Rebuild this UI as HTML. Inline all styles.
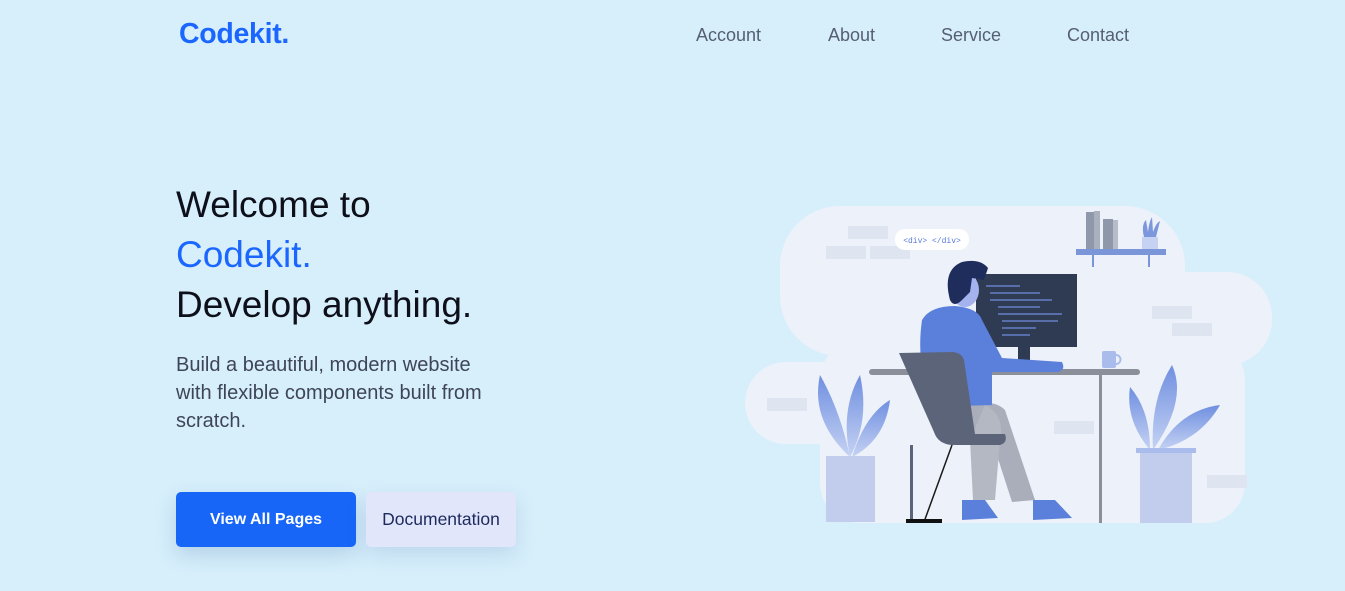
<!DOCTYPE html>
<html><head><meta charset="utf-8"><style>
*{margin:0;padding:0;box-sizing:border-box}
body{width:1345px;height:591px;background:#d7effb;font-family:"Liberation Sans",sans-serif;position:relative;overflow:hidden}
.logo{position:absolute;left:179px;top:18px;font-size:28.5px;font-weight:bold;color:#1a66ff;letter-spacing:-0.3px}
.nav a{position:absolute;top:25px;font-size:18px;color:#555e75;text-decoration:none}
h1{position:absolute;left:176px;top:180px;font-size:37px;font-weight:normal;line-height:50px;color:#0d0f1a}
h1 span{color:#1a66ff}
p{position:absolute;left:176px;top:351px;font-size:20px;line-height:28px;color:#3e4558;width:315px}
.b1{position:absolute;left:176px;top:492px;width:180px;height:55px;background:#1766f8;color:#fff;border-radius:5px;font-size:16px;font-weight:bold;text-align:center;line-height:55px;box-shadow:0 8px 20px rgba(40,90,160,.2)}
.b2{position:absolute;left:366px;top:492px;width:150px;height:55px;background:#e1e6fa;color:#1d2a5e;border-radius:5px;font-size:17.5px;text-align:center;line-height:55px;box-shadow:0 8px 20px rgba(40,90,160,.15)}
svg{position:absolute;left:740px;top:200px}
</style></head><body>
<div class="logo">Codekit.</div>
<div class="nav"><a style="left:696px">Account</a><a style="left:828px">About</a><a style="left:941px">Service</a><a style="left:1067px">Contact</a></div>
<h1>Welcome to<br><span>Codekit.</span><br>Develop anything.</h1>
<p>Build a beautiful, modern website with flexible components built from scratch.</p>
<div class="b1">View All Pages</div>
<div class="b2">Documentation</div>
<svg width="540" height="330" viewBox="0 0 540 330">
<defs><linearGradient id="lf" x1="0" y1="0" x2="0" y2="1"><stop offset="0" stop-color="#6f8fe0"/><stop offset="1" stop-color="#c5d2f3"/></linearGradient></defs>
<g fill="#edf1f9">
<rect x="40" y="6" width="405" height="150" rx="60"/>
<rect x="110" y="72" width="422" height="93" rx="45"/>
<rect x="5" y="162" width="200" height="82" rx="41"/>
<rect x="80" y="140" width="425" height="183" rx="40"/>
</g>
<g fill="#dfe5f0">
<rect x="108" y="26" width="40" height="13"/><rect x="86" y="46" width="40" height="13"/><rect x="130" y="46" width="40" height="13"/>
<rect x="412" y="106" width="40" height="13"/><rect x="432" y="123" width="40" height="13"/>
<rect x="27" y="198" width="40" height="13"/><rect x="314" y="221" width="40" height="13"/><rect x="467" y="275" width="40" height="13"/>
</g>
<rect x="155" y="29" width="74" height="21" rx="10" fill="#fff"/>
<text x="192" y="43" font-size="8" fill="#5b7bd8" text-anchor="middle" font-family="Liberation Mono,monospace">&lt;div&gt; &lt;/div&gt;</text>
<rect x="346" y="12" width="8" height="37" fill="#8f98aa"/><rect x="354" y="11" width="6" height="38" fill="#a9b0be"/><rect x="363" y="19" width="10" height="30" fill="#8f98aa"/><rect x="373" y="20" width="5" height="29" fill="#b6bcc8"/>
<path d="M402 49 L402 37 L418 37 L418 49Z" fill="#c5d2f3"/><path d="M404 37 Q401 25 406 20 L408 32 Q409 22 412 17 L413 32 Q416 23 420 21 L416 37Z" fill="#7d97dc"/>
<rect x="336" y="49" width="90" height="6" fill="#7b95d9"/><rect x="352" y="55" width="2" height="12" fill="#7b95d9"/><rect x="408" y="55" width="2" height="12" fill="#7b95d9"/>
<rect x="236" y="74" width="101" height="73" fill="#2f3a53"/>
<g stroke="#6f8ddd" stroke-width="1.2"><line x1="246" y1="86" x2="280" y2="86"/><line x1="250" y1="93" x2="300" y2="93"/><line x1="250" y1="100" x2="312" y2="100"/><line x1="258" y1="107" x2="300" y2="107"/><line x1="258" y1="114" x2="322" y2="114"/><line x1="262" y1="121" x2="318" y2="121"/><line x1="262" y1="128" x2="296" y2="128"/><line x1="262" y1="135" x2="290" y2="135"/></g>
<rect x="278" y="147" width="12" height="18" fill="#2f3a53"/>
<rect x="362" y="151" width="14" height="17" rx="2" fill="#a9bcec"/><path d="M376 155 a4 4 0 0 1 0 9" stroke="#a9bcec" stroke-width="2" fill="none"/>
<rect x="129" y="169" width="271" height="6" rx="3" fill="#8a8f9a"/>
<rect x="359" y="175" width="3" height="148" fill="#8a8f9a"/>
<path d="M200 205 L237 204 Q255 200 265 210 L295 300 L272 302 L252 240 L212 240Z" fill="#a9aeba"/>
<path d="M245 205 Q265 215 260 240 L255 300 L233 300 L230 240Z" fill="#b4b8c3"/>
<path d="M222 300 L245 300 L258 318 L222 320Z" fill="#5b80db"/><path d="M293 300 L315 300 L332 318 L293 320Z" fill="#5b80db"/>
<path d="M182 120 Q190 106 215 106 Q238 108 242 120 L262 158 L322 162 Q326 170 318 172 L252 172 L252 205 L190 207 Q176 160 182 120Z" fill="#5b80db"/>
<ellipse cx="225" cy="90" rx="14" ry="17" fill="#a4b2ee"/>
<path d="M210 100 Q202 70 222 62 Q240 58 248 68 L244 80 L232 78 L230 92 L222 100 Q214 108 210 100Z" fill="#1f2d5c"/>
<path d="M159 153 L213 152 Q222 153 224 160 L235 234 L265 234 Q268 243 260 245 L212 245 Q198 244 194 232Z" fill="#5c6479"/>
<rect x="170" y="245" width="3" height="78" fill="#5c6479"/><path d="M212 245 L184 322" stroke="#1a1a1a" stroke-width="1.5"/>
<rect x="166" y="319" width="36" height="4" fill="#111"/>
<path d="M110 257 Q70 220 80 175 Q100 210 110 257Z" fill="url(#lf)"/><path d="M110 257 Q100 210 120 175 Q130 220 110 257Z" fill="url(#lf)"/><path d="M112 257 Q125 215 150 200 Q145 240 112 257Z" fill="url(#lf)"/>
<rect x="86" y="256" width="49" height="66" fill="#c2cdee"/>
<path d="M410 250 Q385 220 390 187 Q410 210 410 250Z" fill="url(#lf)"/><path d="M413 250 Q410 200 432 165 Q448 200 413 250Z" fill="url(#lf)"/><path d="M418 250 Q440 210 480 205 Q460 240 418 250Z" fill="url(#lf)"/>
<rect x="396" y="248" width="60" height="5" fill="#a9bcec"/><rect x="400" y="253" width="52" height="70" fill="#c2cdee"/>
</svg>
</body></html>
